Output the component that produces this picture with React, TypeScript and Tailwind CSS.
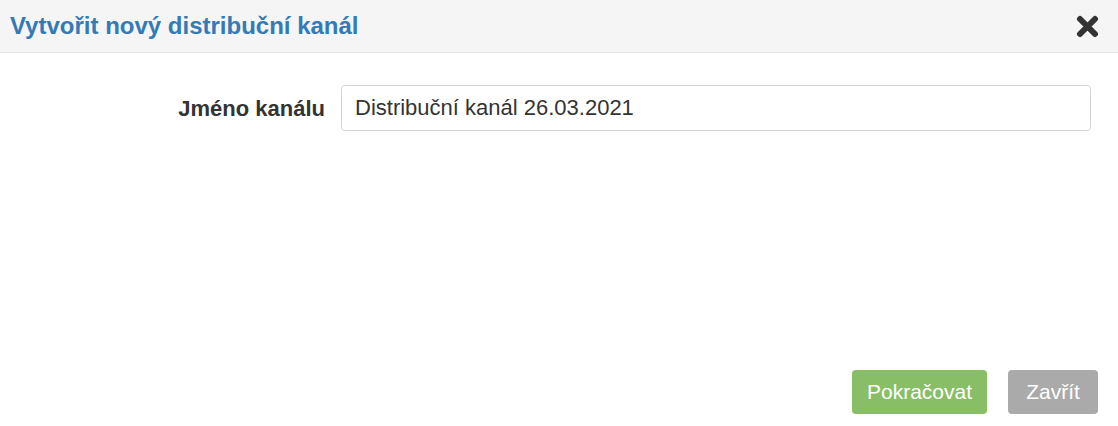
import { type JSX } from "react";

function CloseIcon(): JSX.Element {
  return (
    <svg className="w-[23px] h-[23px]" viewBox="0 0 23 23" fill="none">
      <path d="M4 4 L19 19 M19 4 L4 19" stroke="#333333" strokeWidth={6} strokeLinecap="round" />
    </svg>
  );
}

export default function App(): JSX.Element {
  return (
    <div className="w-[1118px] h-[426px] bg-white flex flex-col font-['Liberation_Sans',Arial,sans-serif] text-[#333333]">
      {/* Header */}
      <header className="h-[53px] flex-shrink-0 bg-[#f5f5f5] border-b border-[#e5e5e5] flex items-center justify-between pl-[10px] pr-[19px]">
        <h1 className="text-[24px] font-bold text-[#337ab7] leading-none">Vytvořit nový distribuční kanál</h1>
        <button className="flex items-center justify-center">
          <CloseIcon />
        </button>
      </header>

      {/* Body */}
      <div className="flex-1 pt-[32px]">
        <div className="flex items-center">
          <label className="w-[341px] pr-[16px] text-right text-[22px] font-bold">Jméno kanálu</label>
          <input
            className="w-[750px] h-[46px] px-[13px] border border-[#d4d4d4] rounded-[4px] text-[22px] text-[#333333] outline-none"
            defaultValue="Distribuční kanál 26.03.2021"
          />
        </div>
      </div>

      {/* Footer */}
      <div className="flex justify-end gap-[21px] pr-[20px] pb-[12px]">
        <button className="w-[135px] h-[44px] rounded-[4px] bg-[#88bf66] text-white text-[21px]">Pokračovat</button>
        <button className="w-[90px] h-[44px] rounded-[4px] bg-[#aaaaaa] text-white text-[21px]">Zavřít</button>
      </div>
    </div>
  );
}
